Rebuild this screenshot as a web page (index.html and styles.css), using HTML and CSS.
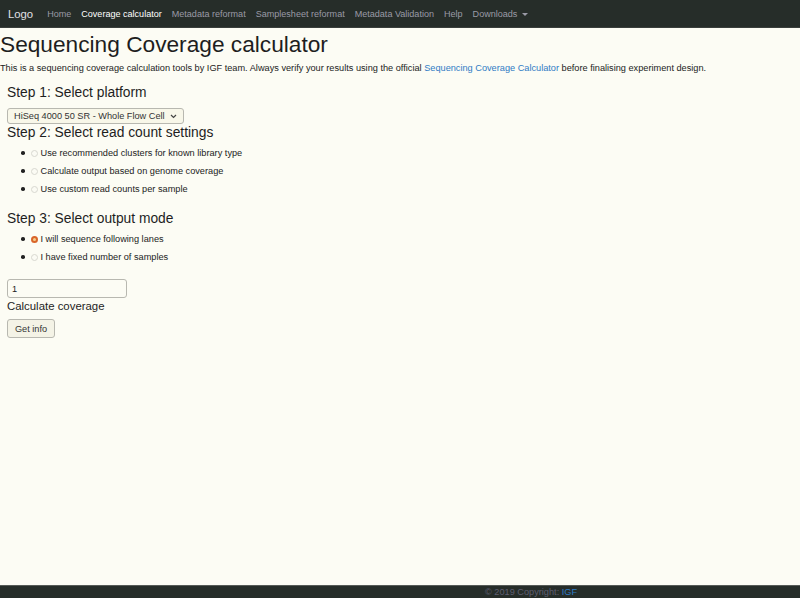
FILE: index.html
```html
<!DOCTYPE html>
<html>
<head>
<meta charset="utf-8">
<title>Sequencing Coverage calculator</title>
<link rel="stylesheet" href="styles.css">
</head>
<body>
<nav class="navbar">
  <span class="brand">Logo</span>
  <a class="nav-link">Home</a>
  <a class="nav-link active">Coverage calculator</a>
  <a class="nav-link">Metadata reformat</a>
  <a class="nav-link">Samplesheet reformat</a>
  <a class="nav-link">Metadata Validation</a>
  <a class="nav-link">Help</a>
  <a class="nav-link">Downloads <span class="caret"></span></a>
</nav>
<main class="page">
  <h1 class="title">Sequencing Coverage calculator</h1>
  <p class="intro">This is a sequencing coverage calculation tools by IGF team. Always verify your results using the official <a class="link">Sequencing Coverage Calculator</a> before finalising experiment design.</p>
  <section class="form">
    <h3 class="step step-first">Step 1: Select platform</h3>
    <div class="select-wrap">
      <select class="platform">
        <option>HiSeq 4000 50 SR - Whole Flow Cell</option>
      </select>
      <svg class="chevron" width="7" height="5" viewBox="0 0 7 5"><path d="M1 1 L3.5 3.5 L6 1" fill="none" stroke="#444" stroke-width="1.2"/></svg>
    </div>
    <h3 class="step">Step 2: Select read count settings</h3>
    <ul class="options">
      <li><label><input type="radio" name="rc" class="radio"> Use recommended clusters for known library type</label></li>
      <li><label><input type="radio" name="rc" class="radio"> Calculate output based on genome coverage</label></li>
      <li><label><input type="radio" name="rc" class="radio"> Use custom read counts per sample</label></li>
    </ul>
    <h3 class="step step-gap">Step 3: Select output mode</h3>
    <ul class="options">
      <li><label><input type="radio" name="om" class="radio" checked> I will sequence following lanes</label></li>
      <li><label><input type="radio" name="om" class="radio"> I have fixed number of samples</label></li>
    </ul>
    <input type="text" class="lanes" value="1">
    <div class="calc-label">Calculate coverage</div>
    <button class="btn">Get info</button>
  </section>
</main>
<footer class="footer">
  <span class="copy">© 2019 Copyright: <a class="footer-link">IGF</a></span>
</footer>
</body>
</html>
```
FILE: styles.css
```css
html, body {
  margin: 0;
  padding: 0;
  height: 100%;
}
body {
  background: #fcfcf4;
  font-family: "Liberation Sans", Arial, sans-serif;
  font-size: 9.2px;
  color: #222;
  overflow: hidden;
}
.navbar {
  height: 28px;
  background: #262d29;
  border-bottom: 1px solid #3a3f3c;
  box-sizing: border-box;
  display: flex;
  align-items: center;
  padding-left: 8px;
}
.brand {
  font-size: 11.3px;
  color: #e0e0e4;
  margin-right: 9px;
}
.nav-link {
  color: #9a9aa6;
  padding: 0 5px;
  font-size: 9.05px;
  white-space: nowrap;
}
.nav-link.active {
  color: #ffffff;
}
.caret {
  display: inline-block;
  width: 0;
  height: 0;
  margin-left: 2px;
  vertical-align: middle;
  border-top: 3px solid #9a9aa6;
  border-left: 3px solid transparent;
  border-right: 3px solid transparent;
}
.page {
  display: block;
}
.title {
  font-size: 22.7px;
  font-weight: normal;
  line-height: 26px;
  margin: 3px 0 0 0;
  color: #1e1e1e;
}
.intro {
  margin: 5px 0 0 0;
  line-height: 13px;
  color: #222;
}
.link {
  color: #2f7bc4;
}
.form {
  padding-left: 7px;
}
.step {
  font-size: 13.8px;
  font-weight: normal;
  line-height: 18px;
  margin: 0;
  color: #1e1e1e;
}
.step-first {
  margin-top: 9px;
}
.step-gap {
  margin-top: 12px;
}
.select-wrap {
  margin-top: 6px;
  width: 177px;
  height: 16px;
  position: relative;
}
.platform {
  appearance: none;
  -webkit-appearance: none;
  display: block;
  width: 177px;
  height: 16px;
  box-sizing: border-box;
  font-family: "Liberation Sans", Arial, sans-serif;
  font-size: 9.2px;
  color: #333;
  background: #f8f7e9;
  border: 1px solid #b8b8b0;
  border-radius: 3px;
  padding: 0 0 0 6px;
}
.chevron {
  position: absolute;
  right: 7px;
  top: 6px;
  pointer-events: none;
}
.options {
  margin: 2px 0 0 0;
  padding-left: 14px;
  list-style: none;
}
.options li {
  height: 18px;
  display: flex;
  align-items: center;
  color: #222;
}
.options li::before {
  content: "";
  width: 3.5px;
  height: 3.5px;
  border-radius: 50%;
  background: #222;
  margin-right: 6px;
  flex: none;
}
.options label {
  display: inline-flex;
  align-items: center;
  gap: 3px;
}
.radio {
  appearance: none;
  -webkit-appearance: none;
  width: 7px;
  height: 7px;
  margin: 0;
  border: 1px solid #d8d8d0;
  border-radius: 50%;
  background: #fbfbf4;
  box-sizing: border-box;
}
.radio:checked {
  border: 2px solid #d9652a;
  background: #f5d08a;
}
.lanes {
  display: block;
  margin-top: 13px;
  width: 120px;
  height: 19px;
  box-sizing: border-box;
  border: 1px solid #b8b8b0;
  border-radius: 3px;
  background: #fcfcf4;
  font-family: "Liberation Sans", Arial, sans-serif;
  font-size: 9.2px;
  color: #222;
  padding: 0 4px;
}
.calc-label {
  font-size: 11.4px;
  line-height: 15px;
  margin-top: 1px;
  color: #1e1e1e;
}
.btn {
  display: block;
  margin-top: 5px;
  width: 48px;
  height: 19px;
  border: 1px solid #b8b8b0;
  border-radius: 3px;
  background: #f4f3e6;
  font-family: "Liberation Sans", Arial, sans-serif;
  font-size: 9.2px;
  color: #333;
  padding: 0;
}
.footer {
  position: fixed;
  left: 0;
  right: 0;
  bottom: 0;
  height: 13px;
  background: #262d29;
  border-top: 1px solid #555a56;
  display: flex;
  align-items: center;
  padding-left: 485px;
  box-sizing: border-box;
}
.copy {
  color: #5e5e70;
  font-size: 9.2px;
}
.footer-link {
  color: #2f7bc4;
}
```
